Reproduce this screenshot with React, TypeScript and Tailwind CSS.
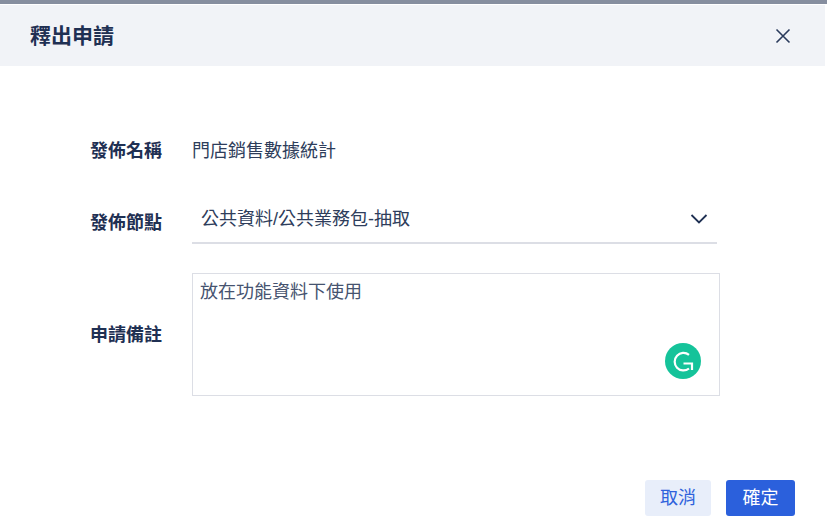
import React from "react";

export default function App() {
  return (
    <div className="w-[827px] h-[531px] bg-white overflow-hidden flex flex-col font-['Liberation_Sans','Noto_Sans_CJK_TC','Noto_Sans_CJK_SC',sans-serif] text-[#1f3053]">
      <div className="h-1 shrink-0 bg-[#868e9f]" />
      <div className="h-px shrink-0 bg-white" />
      <header className="h-[61px] shrink-0 w-[825px] bg-[#f1f3f7] flex items-center justify-between pl-[30px] pr-[33px]">
        <h1 className="text-[21px] font-bold leading-7 text-[#1f3053]">釋出申請</h1>
        <svg width="18" height="18" viewBox="0 0 18 18" fill="none" stroke="#2a3b5c" strokeWidth="1.6" className="mt-px">
          <path d="M2.5 2.5 15.5 15.5M15.5 2.5 2.5 15.5" />
        </svg>
      </header>
      <main className="flex flex-col pl-[90px] pt-[73px]">
        <div className="flex items-center h-6">
          <div className="w-[102px] text-[18px] font-bold leading-6">發佈名稱</div>
          <div className="text-[18px] leading-6 text-[#2e3d5b]">門店銷售數據統計</div>
        </div>
        <div className="flex items-start mt-[36px]">
          <div className="w-[102px] text-[18px] font-bold leading-6 mt-[12px]">發佈節點</div>
          <div className="w-[525px] h-[45px] border-b-2 border-[#dcdee5] flex items-center justify-between px-[9px] pb-[3px]">
            <span className="text-[18px] leading-6 text-[#2e3d5b]">公共資料/公共業務包-抽取</span>
            <svg width="18" height="10" viewBox="0 0 18 10" fill="none" stroke="#1f3053" strokeWidth="1.8">
              <path d="M1.5 1 9 8.5 16.5 1" />
            </svg>
          </div>
        </div>
        <div className="flex items-center mt-[29px]">
          <div className="w-[102px] text-[18px] font-bold leading-6">申請備註</div>
          <div className="relative w-[528px] h-[123px] border border-[#dcdee5] px-[7px] pt-[6px] pb-1 text-[18px] leading-6 text-[#46536f]">
            放在功能資料下使用
            <div className="absolute left-[472px] top-[69px] w-9 h-9 rounded-full bg-[#15c39a]">
              <svg width="36" height="36" viewBox="0 0 36 36" fill="none" stroke="white" strokeWidth="2.2">
                <path d="M24 11.8A8.8 8.8 0 1 0 24 25.5" />
                <path d="M18.5 20.5H27V27" />
              </svg>
            </div>
          </div>
        </div>
      </main>
      <footer className="flex justify-end gap-[15px] pr-8 mt-[84px]">
        <button className="w-[66px] h-9 rounded-[3px] bg-[#e8eefa] text-[18px] text-[#2f62dc]">取消</button>
        <button className="w-[69px] h-9 rounded-[3px] bg-[#2b60dc] text-[18px] text-white">確定</button>
      </footer>
    </div>
  );
}
